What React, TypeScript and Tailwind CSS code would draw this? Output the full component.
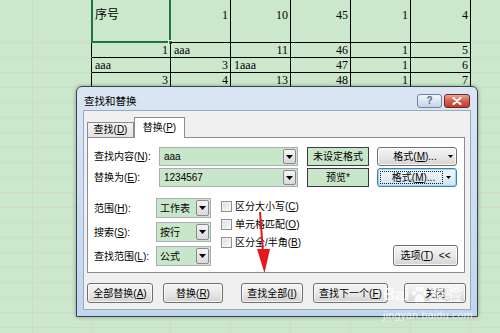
import React from "react";

const COLS = [33, 59, 79, 60, 60, 60, 60, 60, 40];
type Cell = { t: string; a: "l" | "r" } | null;

const DATA: Cell[][] = [
  [null, null, { t: "序号", a: "l" }, { t: "1", a: "r" }, { t: "10", a: "r" }, { t: "45", a: "r" }, { t: "1", a: "r" }, { t: "4", a: "r" }, null],
  [null, null, { t: "1", a: "r" }, { t: "aaa", a: "l" }, { t: "11", a: "r" }, { t: "46", a: "r" }, { t: "1", a: "r" }, { t: "5", a: "r" }, null],
  [null, null, { t: "aaa", a: "l" }, { t: "3", a: "r" }, { t: "1aaa", a: "l" }, { t: "47", a: "r" }, { t: "1", a: "r" }, { t: "6", a: "r" }, null],
  [null, null, { t: "3", a: "r" }, { t: "4", a: "r" }, { t: "13", a: "r" }, { t: "48", a: "r" }, { t: "1", a: "r" }, { t: "7", a: "r" }, null],
];

function Sheet() {
  const rows = [];
  for (let r = 0; r < 21; r++) {
    const cells = [];
    for (let c = 0; c < 9; c++) {
      const inTable = r < 10 && c >= 2 && c <= 7;
      const leftEdge = r < 10 && c === 1;
      const rClass =
        c === 8 ? "" : inTable || leftEdge ? "border-r border-r-black" : "border-r border-r-[#d0d8d0]";
      const bClass = inTable ? "border-b border-b-black" : "border-b border-b-[#d0d8d0]";
      const cell = DATA[r] ? DATA[r][c] : null;
      const align = cell && cell.a === "r" ? "justify-end pr-[2px]" : "justify-start pl-[3px]";
      const vert = r === 0 ? "items-start pt-[8px]" : "items-center";
      cells.push(
        <div
          key={c}
          className={`relative flex shrink-0 ${vert} ${align} ${rClass} ${bClass}`}
          style={{ width: COLS[c] }}
        >
          {cell && <span className="leading-[14px] whitespace-nowrap">{cell.t}</span>}
          {r === 0 && c === 2 && (
            <div className="absolute left-[-1px] top-[-3px] right-[-1px] bottom-[-1px] border-2 border-[#217346]">
              <div className="absolute right-[-4px] bottom-[-4px] w-[5px] h-[5px] bg-[#217346] border border-[#e8f5e8]" />
            </div>
          )}
        </div>
      );
    }
    rows.push(
      <div key={r} className={`flex ${r === 0 ? "h-[43px]" : "h-[15px]"}`}>
        {cells}
      </div>
    );
  }
  return (
    <div className="flex flex-col text-[12px] text-black font-['Liberation_Serif','Noto_Sans_CJK_SC',serif]">
      {rows}
    </div>
  );
}

function Tri() {
  return (
    <svg width="7" height="4" viewBox="0 0 7 4">
      <polygon points="0,0 7,0 3.5,4" fill="#000" />
    </svg>
  );
}

function DropBtn() {
  return (
    <div className="ml-auto w-[13px] h-full border border-[#8a8a8a] rounded-[2px] bg-linear-to-b from-[#f6f6f6] to-[#d9d9d9] flex items-center justify-center">
      <Tri />
    </div>
  );
}

function Btn({ children, className }: { children: React.ReactNode; className: string }) {
  return (
    <div
      className={`flex items-center justify-center rounded-[3px] border border-[#707070] bg-linear-to-b from-[#f5f5f5] via-[#e9e9e9] to-[#d3d3d3] shadow-[inset_0_0_0_1px_rgba(255,255,255,0.75)] text-[10px] text-black whitespace-nowrap ${className}`}
    >
      {children}
    </div>
  );
}

function Check({ children }: { children: React.ReactNode }) {
  return (
    <div className="h-[18px] flex items-center">
      <div className="w-[11px] h-[11px] border border-[#8e8f8f] bg-linear-to-br from-[#dcdcdc] to-[#fbfbfb] shadow-[inset_0_0_0_1px_#f4f4f4]" />
      <span className="ml-[3px] whitespace-nowrap">{children}</span>
    </div>
  );
}

function Select({ value }: { value: string }) {
  return (
    <div className="w-[55px] h-[20px] border border-[#abadb3] bg-[#c8e6c9] flex items-center p-px">
      <span className="pl-[2px]">{value}</span>
      <DropBtn />
    </div>
  );
}

function Dialog() {
  return (
    <div className="absolute left-[76px] top-[86px] w-[402px] h-[231px] rounded-t-[6px] border border-[#38414d] bg-linear-to-b from-[#dae6f3] to-[#c0d6ee] flex flex-col font-['Liberation_Sans','Noto_Sans_CJK_SC',sans-serif] text-[10px] text-black shadow-[0_0_4px_rgba(0,0,0,0.35)]">
      {/* title bar */}
      <div className="h-[23px] flex items-start pl-[7px] pr-[7px]">
        <span className="mt-[8px] leading-[12px] text-[10.5px]">查找和替换</span>
        <div className="ml-auto mt-[7px] flex gap-[2px]">
          <div className="w-[25px] h-[14px] rounded-[3px] border border-[#6e83a0] bg-linear-to-b from-[#f2f6fb] via-[#dce6f2] to-[#c3d3e7] flex items-center justify-center text-[10px] font-bold leading-none text-[#5a6a80]">
            ?
          </div>
          <div className="w-[26px] h-[14px] rounded-[3px] border border-[#6d2a24] bg-linear-to-b from-[#e8a596] via-[#d25e4c] to-[#c13a2a] flex items-center justify-center">
            <svg width="10" height="8" viewBox="0 0 10 8">
              <path d="M1.5 1 L8.5 7 M8.5 1 L1.5 7" stroke="#fff" strokeWidth="2" strokeLinecap="round" />
            </svg>
          </div>
        </div>
      </div>
      {/* content */}
      <div className="mx-[6px] flex-1 mb-[6px] bg-[#f0f0f0] border border-[#97aac2] flex flex-col">
        {/* tabs */}
        <div className="h-[26px] flex items-end pl-[3px]">
          <div className="w-[47px] h-[15px] border border-b-0 border-[#898c95] bg-linear-to-b from-[#f3f3f3] to-[#e3e3e3] flex items-center justify-center leading-none">
            查找(<u>D</u>)
          </div>
          <div className="relative z-10 w-[51px] h-[21px] -mb-px border border-b-0 border-[#898c95] bg-white flex items-center justify-center leading-none pb-[1px]">
            替换(<u>P</u>)
          </div>
        </div>
        {/* panel */}
        <div className="ml-[3px] w-[378px] h-[136px] border border-[#898c95] bg-white flex flex-col pl-[6px]">
          <div className="mt-[9px] h-[19px] flex items-center">
            <div className="w-[65px] whitespace-nowrap">
              查找内容(<u>N</u>):
            </div>
            <div className="w-[139px] h-full border border-[#abadb3] bg-[#c8e6c9] flex items-center p-px">
              <span className="pl-[3px]">aaa</span>
              <DropBtn />
            </div>
            <div className="ml-[9px] w-[62px] h-full border border-[#3c3c3c] bg-[#c8e6c9] flex items-center justify-center">
              未设定格式
            </div>
            <div className="ml-[8px] w-[80px] h-full rounded-[3px] border border-[#707070] bg-linear-to-b from-[#f5f5f5] via-[#e9e9e9] to-[#d3d3d3] shadow-[inset_0_0_0_1px_rgba(255,255,255,0.75)] flex items-center">
              <div className="flex-1 flex items-center justify-center pl-[8px]">
                格式(<u>M</u>)...
              </div>
              <div className="w-[12px] flex justify-center">
                <svg width="5" height="3" viewBox="0 0 5 3">
                  <polygon points="0,0 5,0 2.5,3" fill="#000" />
                </svg>
              </div>
            </div>
          </div>
          <div className="mt-[2px] h-[19px] flex items-center">
            <div className="w-[65px] whitespace-nowrap">
              替换为(<u>E</u>):
            </div>
            <div className="w-[139px] h-full border border-[#abadb3] bg-[#c8e6c9] flex items-center p-px">
              <span className="pl-[3px]">1234567</span>
              <DropBtn />
            </div>
            <div className="ml-[9px] w-[62px] h-full border border-[#3c3c3c] bg-[#c8e6c9] flex items-center justify-center">
              预览*
            </div>
            <div className="ml-[8px] w-[80px] h-full rounded-[3px] border border-[#3c7fb1] bg-linear-to-b from-[#f2f8fc] via-[#e3eef7] to-[#cfe2f1] shadow-[inset_0_0_0_1px_#9fd5f3] flex items-center p-[2px]">
              <div className="flex-1 h-full border border-dotted border-[#222] flex items-center justify-center pl-[4px]">
                格式(<u>M</u>)...
              </div>
              <div className="w-[11px] flex justify-center">
                <svg width="5" height="3" viewBox="0 0 5 3">
                  <polygon points="0,0 5,0 2.5,3" fill="#000" />
                </svg>
              </div>
            </div>
          </div>
          {/* lower */}
          <div className="mt-[11px] flex">
            <div className="flex flex-col gap-[4px]">
              <div className="flex items-center">
                <div className="w-[62px] whitespace-nowrap">
                  范围(<u>H</u>):
                </div>
                <Select value="工作表" />
              </div>
              <div className="flex items-center">
                <div className="w-[62px] whitespace-nowrap">
                  搜索(<u>S</u>):
                </div>
                <Select value="按行" />
              </div>
              <div className="flex items-center">
                <div className="w-[62px] whitespace-nowrap">
                  查找范围(<u>L</u>):
                </div>
                <Select value="公式" />
              </div>
            </div>
            <div className="ml-[10px] mt-[-1px] flex flex-col">
              <Check>
                区分大小写(<u>C</u>)
              </Check>
              <Check>
                单元格匹配(<u>O</u>)
              </Check>
              <Check>
                区分全/半角(<u>B</u>)
              </Check>
            </div>
            <Btn className="ml-auto mr-[6px] self-end w-[65px] h-[21px]">
              选项(<u>T</u>)&nbsp;&nbsp;&lt;&lt;
            </Btn>
          </div>
        </div>
        {/* bottom buttons */}
        <div className="mt-[10px] ml-[3px] flex">
          <Btn className="w-[66px] h-[20px]">
            全部替换(<u>A</u>)
          </Btn>
          <Btn className="ml-[10px] w-[60px] h-[20px]">
            替换(<u>R</u>)
          </Btn>
          <Btn className="ml-[18px] w-[62px] h-[20px]">
            查找全部(<u>I</u>)
          </Btn>
          <Btn className="ml-[10px] w-[75px] h-[20px]">
            查找下一个(<u>F</u>)
          </Btn>
          <Btn className="ml-[16px] w-[62px] h-[20px]">关闭</Btn>
        </div>
      </div>
    </div>
  );
}

function Watermark() {
  return (
    <div className="absolute left-[383px] top-[286px] text-white/75 pointer-events-none font-['Liberation_Sans','Noto_Sans_CJK_SC',sans-serif]">
      <div className="flex items-center text-[17px] leading-[18px] font-bold">
        <span>Bai</span>
        <svg width="18" height="18" viewBox="0 0 18 18" className="mx-[1px]">
          <g fill="rgba(255,255,255,0.85)">
            <ellipse cx="4" cy="7" rx="2" ry="2.5" />
            <ellipse cx="7.5" cy="3" rx="2" ry="2.5" />
            <ellipse cx="11.5" cy="3" rx="2" ry="2.5" />
            <ellipse cx="15" cy="7" rx="2" ry="2.5" />
            <path d="M9.5 8 C6 8 4 13 4.5 15 C5 17 8 16 9.5 16 C11 16 14 17 14.5 15 C15 13 13 8 9.5 8 Z" />
          </g>
        </svg>
        <span className="text-[16px]">经验</span>
      </div>
      <div className="mt-[5px] text-[10.5px] leading-[12px] tracking-[0.3px]">jingyan.baidu.com</div>
    </div>
  );
}

export default function App() {
  return (
    <div className="relative w-[500px] h-[333px] overflow-hidden bg-[#cce8cc]">
      <Sheet />
      <Dialog />
      <svg className="absolute left-0 top-0 pointer-events-none" width="500" height="333" viewBox="0 0 500 333">
        <line x1="260" y1="212" x2="263" y2="252" stroke="#e3191b" strokeWidth="2" />
        <polygon points="257,249 270,249 264.5,273" fill="#e3191b" />
      </svg>
      <Watermark />
    </div>
  );
}
